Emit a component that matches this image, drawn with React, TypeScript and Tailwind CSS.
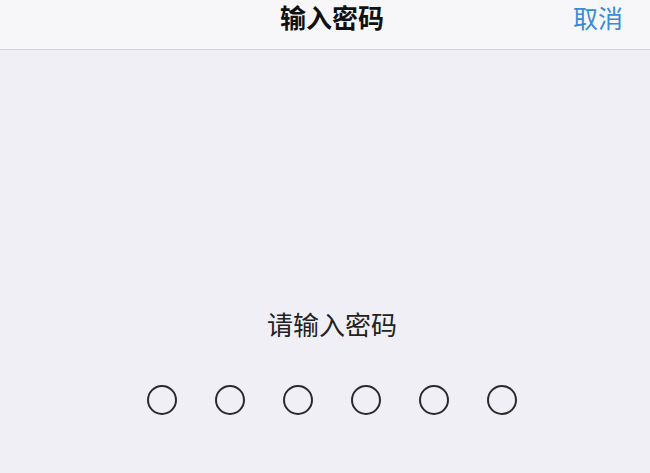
const DOTS = [0, 1, 2, 3, 4, 5];

export default function App() {
  return (
    <div
      className="w-[650px] h-[473px] bg-[#efeff5] flex flex-col overflow-hidden"
      style={{ fontFamily: '"Noto Sans CJK SC", "Noto Sans", sans-serif' }}
    >
      <div className="relative h-[50px] bg-[#f7f7f9] border-b border-[#d6d6da] flex items-start justify-center pl-[14px] pt-[2px]">
        <span className="text-[26px] leading-[30px] font-semibold text-[#111]">输入密码</span>
        <span className="absolute right-[27px] top-[2px] text-[25px] leading-[30px] text-[#3a8bd6]">取消</span>
      </div>

      <div className="flex flex-col items-center pl-[14px] pt-[259px]">
        <p className="text-[26px] leading-[30px] text-[#222]">请输入密码</p>
        <div className="flex gap-[38px] mt-[46px]">
          {DOTS.map((i) => (
            <div key={i} className="w-[30px] h-[30px] rounded-full border-2 border-[#2a2a2a]" />
          ))}
        </div>
      </div>
    </div>
  );
}
